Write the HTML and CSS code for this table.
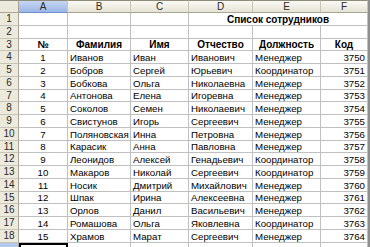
FILE: index.html
```html
<!DOCTYPE html>
<html lang="ru">
<head>
<meta charset="utf-8">
<link rel="stylesheet" href="styles.css">
</head>
<body>
<div class="sheet">
  <div class="ch corner"></div>
  <div class="ch sel">A</div>
  <div class="ch">B</div>
  <div class="ch">C</div>
  <div class="ch">D</div>
  <div class="ch">E</div>
  <div class="ch">F</div>
  <div class="ch edge"></div>

  <div class="rh">1</div><div class="c"></div><div class="c"></div><div class="c"></div><div class="c b title">Список сотрудников</div><div class="c edge"></div>
  <div class="rh">2</div><div class="c"></div><div class="c"></div><div class="c"></div><div class="c"></div><div class="c"></div><div class="c"></div><div class="c edge"></div>
  <div class="rh">3</div><div class="c b ctr">№</div><div class="c b ctr">Фамилия</div><div class="c b ctr">Имя</div><div class="c b ctr">Отчество</div><div class="c b ctr">Должность</div><div class="c b ctr">Код</div><div class="c edge"></div>

  <div class="rh">4</div><div class="c ctr">1</div><div class="c">Иванов</div><div class="c">Иван</div><div class="c">Иванович</div><div class="c">Менеджер</div><div class="c num">3750</div><div class="c edge"></div>
  <div class="rh">5</div><div class="c ctr">2</div><div class="c">Бобров</div><div class="c">Сергей</div><div class="c">Юрьевич</div><div class="c">Координатор</div><div class="c num">3751</div><div class="c edge"></div>
  <div class="rh">6</div><div class="c ctr">3</div><div class="c">Бобкова</div><div class="c">Ольга</div><div class="c">Николаевна</div><div class="c">Менеджер</div><div class="c num">3752</div><div class="c edge"></div>
  <div class="rh">7</div><div class="c ctr">4</div><div class="c">Антонова</div><div class="c">Елена</div><div class="c">Игоревна</div><div class="c">Менеджер</div><div class="c num">3753</div><div class="c edge"></div>
  <div class="rh">8</div><div class="c ctr">5</div><div class="c">Соколов</div><div class="c">Семен</div><div class="c">Николаевич</div><div class="c">Менеджер</div><div class="c num">3754</div><div class="c edge"></div>
  <div class="rh">9</div><div class="c ctr">6</div><div class="c">Свистунов</div><div class="c">Игорь</div><div class="c">Сергеевич</div><div class="c">Менеджер</div><div class="c num">3755</div><div class="c edge"></div>
  <div class="rh">10</div><div class="c ctr">7</div><div class="c">Поляновская</div><div class="c">Инна</div><div class="c">Петровна</div><div class="c">Менеджер</div><div class="c num">3756</div><div class="c edge"></div>
  <div class="rh">11</div><div class="c ctr">8</div><div class="c">Карасик</div><div class="c">Анна</div><div class="c">Павловна</div><div class="c">Менеджер</div><div class="c num">3757</div><div class="c edge"></div>
  <div class="rh">12</div><div class="c ctr">9</div><div class="c">Леонидов</div><div class="c">Алексей</div><div class="c">Генадьевич</div><div class="c">Координатор</div><div class="c num">3758</div><div class="c edge"></div>
  <div class="rh">13</div><div class="c ctr">10</div><div class="c">Макаров</div><div class="c">Николай</div><div class="c">Сергеевич</div><div class="c">Координатор</div><div class="c num">3759</div><div class="c edge"></div>
  <div class="rh">14</div><div class="c ctr">11</div><div class="c">Носик</div><div class="c">Дмитрий</div><div class="c">Михайлович</div><div class="c">Менеджер</div><div class="c num">3760</div><div class="c edge"></div>
  <div class="rh">15</div><div class="c ctr">12</div><div class="c">Шпак</div><div class="c">Ирина</div><div class="c">Алексеевна</div><div class="c">Менеджер</div><div class="c num">3761</div><div class="c edge"></div>
  <div class="rh">16</div><div class="c ctr">13</div><div class="c">Орлов</div><div class="c">Данил</div><div class="c">Васильевич</div><div class="c">Менеджер</div><div class="c num">3762</div><div class="c edge"></div>
  <div class="rh">17</div><div class="c ctr">14</div><div class="c">Ромашова</div><div class="c">Ольга</div><div class="c">Яковлевна</div><div class="c">Координатор</div><div class="c num">3763</div><div class="c edge"></div>
  <div class="rh">18</div><div class="c ctr">15</div><div class="c">Храмов</div><div class="c">Марат</div><div class="c">Сергеевич</div><div class="c">Менеджер</div><div class="c num">3764</div><div class="c edge"></div>
  <div class="rh rsel"></div><div class="c active"></div><div class="c"></div><div class="c"></div><div class="c"></div><div class="c"></div><div class="c"></div><div class="c edge"></div>
</div>
</body>
</html>
```

FILE: styles.css
```css
html, body {
  margin: 0;
  padding: 0;
  background: #ffffff;
  overflow: hidden;
}

.sheet {
  display: grid;
  grid-template-columns: 19px 49px 63px 58px 64px 68px 47px 2px;
  grid-template-rows: 13px repeat(19, 12.75px);
  width: 370px;
  font-family: "Liberation Sans", Arial, sans-serif;
  font-size: 9.7px;
  color: #000;
}

.ch {
  box-sizing: border-box;
  background: linear-gradient(#faf9f4, #e6e4d6);
  border-right: 1px solid #c8c5b4;
  border-bottom: 1px solid #a9a592;
  border-top: 1px solid #8e8b78;
  text-align: center;
  line-height: 11px;
  font-size: 10px;
  color: #2a2a2a;
  overflow: hidden;
}

.ch.sel {
  background: linear-gradient(#c6d6f4, #9cb6e6);
  border-bottom: 1px solid #6f8fcf;
}

.ch.corner {
  background: #ebe9dc;
  border-right: 1px solid #a9a592;
}

.edge {
  background: #8e8e8e;
  border: 0 !important;
}

.rh {
  box-sizing: border-box;
  background: #ebeadc;
  border-right: 1px solid #a9a592;
  border-bottom: 1px solid #c8c5b4;
  text-align: center;
  line-height: 12px;
  font-size: 10px;
  color: #2a2a2a;
  overflow: hidden;
}

.rh.rsel {
  background: #b5c9ee;
}

.c {
  box-sizing: border-box;
  border-right: 1px solid #c0c0c0;
  border-bottom: 1px solid #c0c0c0;
  padding: 0 2px;
  white-space: nowrap;
  overflow: hidden;
  display: flex;
  align-items: flex-end;
  line-height: 11px;
}

.ctr {
  justify-content: center;
}

.num {
  justify-content: flex-end;
}

.b {
  font-weight: bold;
  font-size: 10px;
}

.title {
  grid-column: span 3;
  justify-content: center;
}

.active {
  border: 2px solid #000;
  border-bottom: 0;
}
```
